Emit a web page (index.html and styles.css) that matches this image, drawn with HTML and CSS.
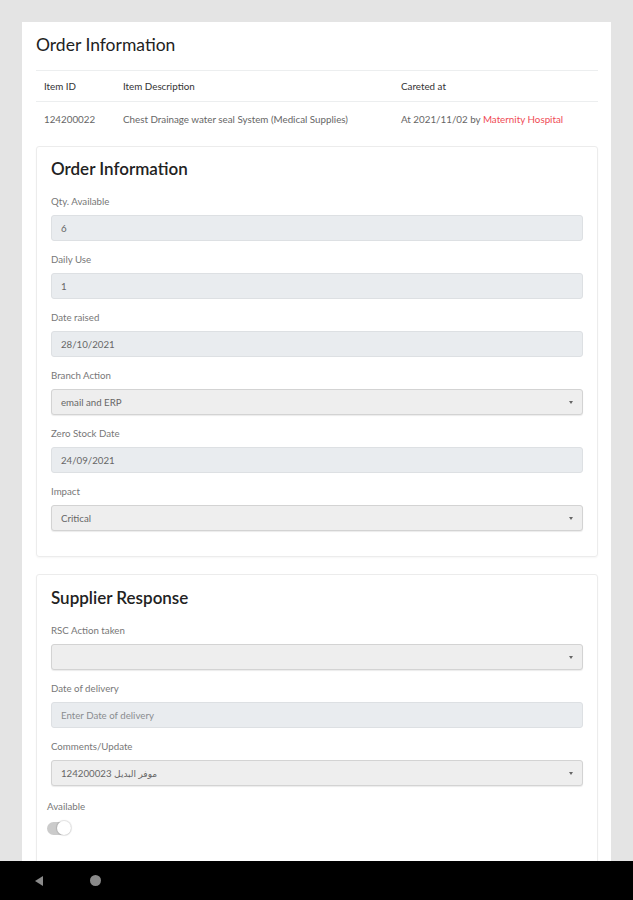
FILE: index.html
```html
<!DOCTYPE html>
<html>
<head>
<meta charset="utf-8">
<link rel="stylesheet" href="styles.css">
</head>
<body>
<div class="page">
  <div class="card">
    <h1 class="card-title">Order Information</h1>
    <table class="items">
      <thead>
        <tr><th class="c1">Item ID</th><th class="c2">Item Description</th><th class="c3">Careted at</th></tr>
      </thead>
      <tbody>
        <tr><td>124200022</td><td>Chest Drainage water seal System (Medical Supplies)</td><td>At 2021/11/02 by <span class="red">Maternity Hospital</span></td></tr>
      </tbody>
    </table>

    <section class="panel">
      <h2 class="panel-title">Order Information</h2>
      <div class="field"><label>Qty. Available</label><div class="input">6</div></div>
      <div class="field"><label>Daily Use</label><div class="input">1</div></div>
      <div class="field"><label>Date raised</label><div class="input">28/10/2021</div></div>
      <div class="field"><label>Branch Action</label><div class="select">email and ERP<span class="caret"></span></div></div>
      <div class="field"><label>Zero Stock Date</label><div class="input">24/09/2021</div></div>
      <div class="field"><label>Impact</label><div class="select">Critical<span class="caret"></span></div></div>
    </section>

    <section class="panel panel-2">
      <h2 class="panel-title">Supplier Response</h2>
      <div class="field"><label>RSC Action taken</label><div class="select"><span class="caret"></span></div></div>
      <div class="field"><label>Date of delivery</label><div class="input placeholder">Enter Date of delivery</div></div>
      <div class="field"><label>Comments/Update</label><div class="select">124200023 <span class="ar">موفر البديل</span><span class="caret"></span></div></div>
      <div class="toggle-field">
        <label>Available</label>
        <div class="toggle"><span class="knob"></span></div>
      </div>
    </section>
  </div>
</div>
<div class="navbar">
  <svg class="nav-back" width="12" height="12" viewBox="0 0 12 12"><polygon points="10,1 10,11 2,6" fill="#8a8a8a"/></svg>
  <span class="nav-home"></span>
</div>
</body>
</html>
```
FILE: styles.css
```css
* { box-sizing: border-box; }
html, body { margin: 0; padding: 0; }
body {
  background: #e4e4e4;
  font-family: Lato, "Noto Sans", sans-serif;
  color: #333;
  height: 900px;
  overflow: hidden;
}
.page {
  padding: 22px 22px 0 22px;
}
.card {
  background: #fff;
  padding: 13px 13px 40px 14px;
  min-height: 900px;
}
.card-title {
  margin: 0;
  font-size: 17.5px;
  line-height: 20px;
  font-weight: 400;
  color: #222;
}
.items {
  margin-top: 15px;
  width: 100%;
  border-collapse: collapse;
  font-size: 9.8px;
}
.items th, .items td {
  text-align: left;
  padding: 0 8px;
  border-top: 1px solid #eceeef;
}
.items th {
  height: 31px;
  font-weight: 400;
  color: #333;
}
.items td {
  height: 34px;
  color: #666;
  vertical-align: middle;
}
.items .c1 { width: 79px; }
.items .c2 { width: 278px; }
.red { color: #ef4b55; }

.panel {
  margin-top: 10px;
  border: 1px solid #ececec;
  border-radius: 3px;
  box-shadow: 0 1px 2px rgba(0,0,0,0.04);
  padding: 12px 14px 13px 14px;
}
.panel-2 {
  margin-top: 17px;
  padding-top: 13px;
  padding-bottom: 40px;
}
.panel-title {
  margin: 0 0 16px 0;
  font-size: 17px;
  line-height: 20px;
  font-weight: 600;
  color: #222;
}
.field { margin-bottom: 12px; }
.field label, .toggle-field label {
  display: block;
  font-size: 9.7px;
  line-height: 12px;
  color: #777;
  margin-bottom: 8px;
}
.input, .select {
  position: relative;
  height: 26px;
  border-radius: 3px;
  font-size: 9.7px;
  line-height: 24px;
  padding: 0 9px;
  color: #666;
}
.input {
  background: #e9ecef;
  border: 1px solid #dde0e3;
}
.input.placeholder { color: #8a8d90; }
.select {
  background: #eeeeee;
  border: 1px solid #d3d3d3;
  box-shadow: 0 1px 1px rgba(0,0,0,0.08);
}
.caret {
  position: absolute;
  right: 9px;
  top: 11px;
  width: 0;
  height: 0;
  border-left: 2.5px solid transparent;
  border-right: 2.5px solid transparent;
  border-top: 3px solid #666;
}
.ar { font-family: "Noto Sans", "DejaVu Sans", sans-serif; font-size: 9px; }
.toggle-field {
  margin-left: -4px;
  padding-top: 2px;
}
.toggle-field label { margin-bottom: 10px; }
.toggle {
  position: relative;
  width: 24px;
  height: 13px;
  border-radius: 7px;
  background: #cbcbcb;
}
.knob {
  position: absolute;
  right: 0;
  top: -0.5px;
  width: 14px;
  height: 14px;
  border-radius: 50%;
  background: #fff;
  box-shadow: 0 0 1px 1px rgba(0,0,0,0.12);
}
.navbar {
  position: fixed;
  left: 0;
  right: 0;
  bottom: 0;
  height: 39px;
  background: #000;
  display: flex;
  align-items: center;
  padding-left: 33px;
  gap: 45px;
}
.nav-back { display: block; }
.nav-home {
  width: 11px;
  height: 11px;
  border-radius: 50%;
  background: #8a8a8a;
}
```
